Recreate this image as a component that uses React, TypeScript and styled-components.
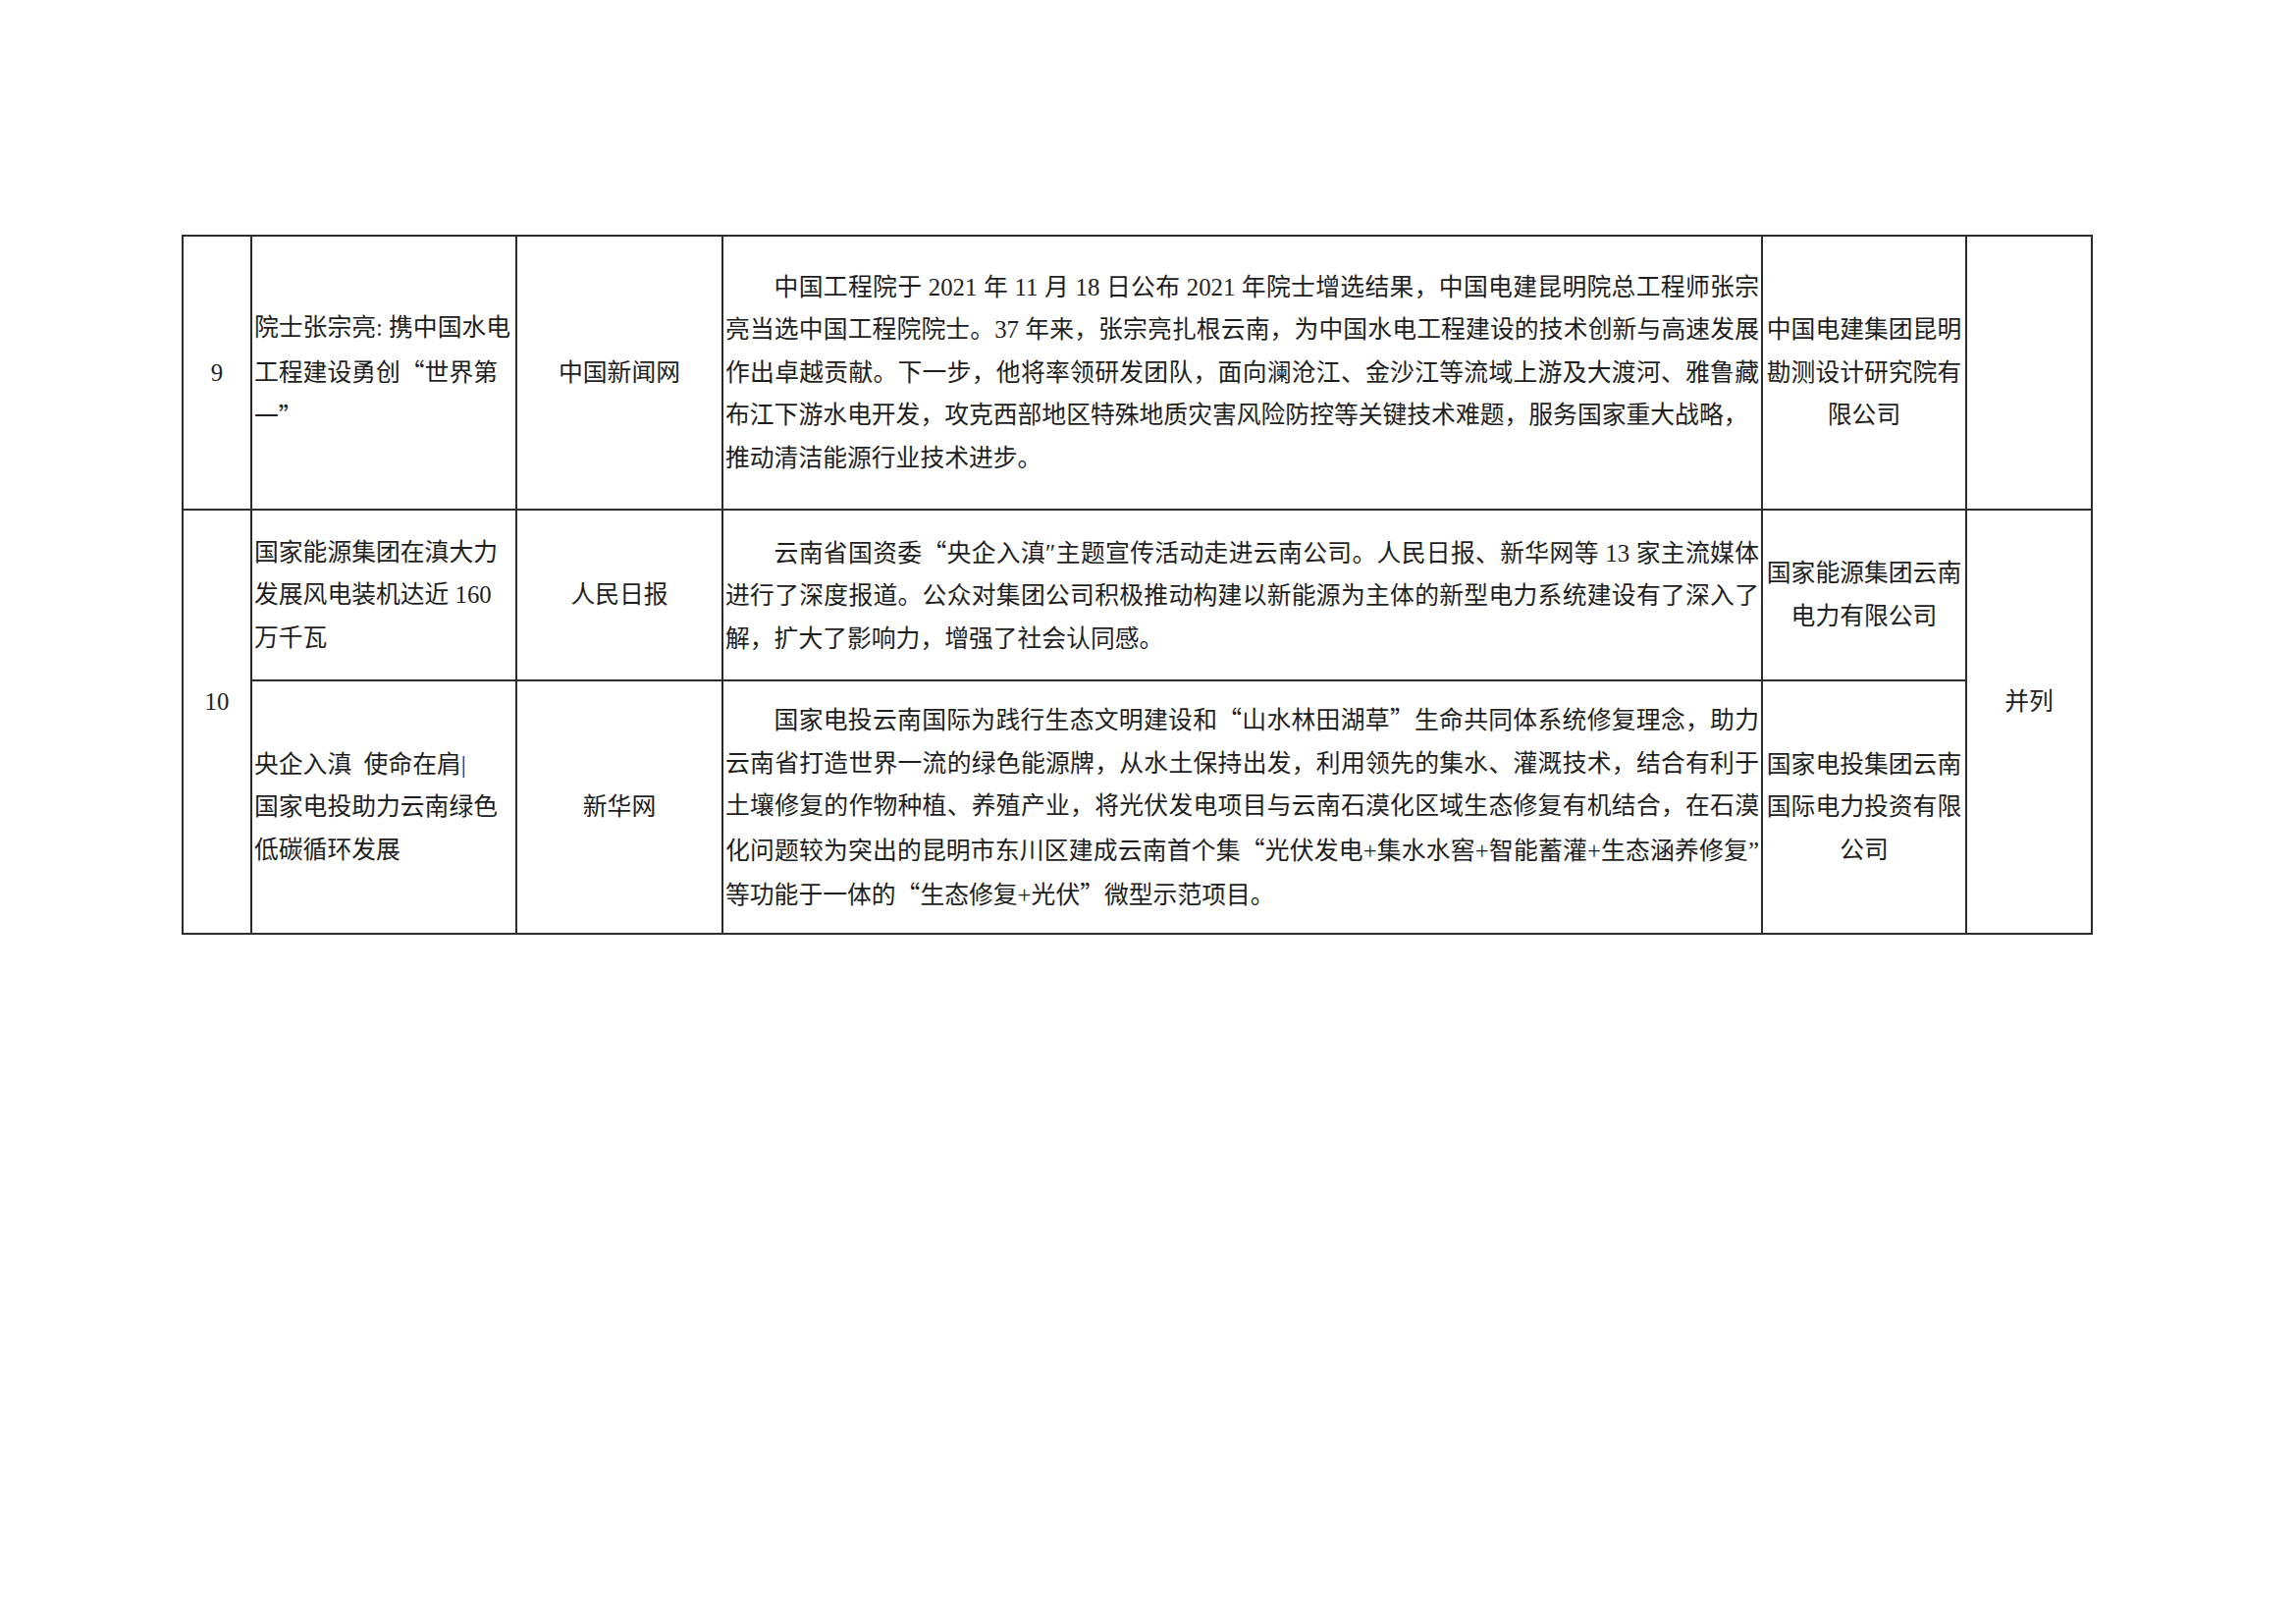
import React from "react";
import styled, { createGlobalStyle } from "styled-components";

const GlobalStyle = createGlobalStyle`
  html, body {
    margin: 0;
    padding: 0;
    background: #ffffff;
  }
`;

const Page = styled.div`
  width: 2339px;
  height: 1654px;
  box-sizing: border-box;
  padding: 239px 0 0 185px;
  background: #ffffff;
`;

const Table = styled.table`
  width: 1945px;
  border-collapse: collapse;
  table-layout: fixed;
  font-family: "Liberation Serif", "Noto Sans CJK SC", serif;
  font-size: 24.8px;
  font-weight: 400;
  color: #1e1e1e;
`;

const Col = styled.col<{ $w: number }>`
  width: ${(p) => p.$w}px;
`;

const Row = styled.tr<{ $h: number }>`
  height: ${(p) => p.$h}px;
`;

const Cell = styled.td<{ $align?: "left" | "center"; $lift?: number }>`
  border: 2px solid #2c2c2c;
  padding: 0 2px ${(p) => p.$lift || 0}px 2px;
  vertical-align: middle;
  text-align: ${(p) => p.$align || "center"};
  line-height: 43.6px;
  overflow: hidden;
`;

const Line = styled.span<{ $last?: boolean; $indent?: boolean }>`
  display: block;
  white-space: nowrap;
  text-align: justify;
  text-align-last: ${(p) => (p.$last ? "left" : "justify")};
  padding-left: ${(p) => (p.$indent ? "2em" : "0")};
`;

const Plain = styled.span`
  display: block;
  white-space: pre;
`;

// full-width quote marks as in the SimSun original
const Quote = styled.span`
  font-family: "Noto Sans CJK SC", sans-serif;
`;

// "“" and "”" become full-width marks; "”^" keeps the narrow latin mark
const renderText = (text: string) =>
  text.split(/(“|”\^|”)/).map((part, i) => {
    if (part === "“" || part === "”") return <Quote key={i}>{part}</Quote>;
    if (part === "”^") return "”";
    return part;
  });

const Paragraph = ({ lines }: { lines: string[] }) => (
  <>
    {lines.map((l, i) => (
      <Line key={i} $indent={i === 0} $last={i === lines.length - 1 || l.endsWith("#")}>
        {renderText(l.replace(/#$/, ""))}
      </Line>
    ))}
  </>
);

const Stack = ({ lines }: { lines: string[] }) => (
  <>
    {lines.map((l, i) => (
      <Plain key={i}>{renderText(l)}</Plain>
    ))}
  </>
);

const App: React.FC = () => {
  return (
    <Page>
      <GlobalStyle />
      <Table>
        <colgroup>
          <Col $w={70} />
          <Col $w={270} />
          <Col $w={210} />
          <Col $w={1059} />
          <Col $w={208} />
          <Col $w={128} />
        </colgroup>
        <tbody>
          <Row $h={279}>
            <Cell>9</Cell>
            <Cell $align="left">
              <Stack lines={["院士张宗亮: 携中国水电", "工程建设勇创“世界第", "一”"]} />
            </Cell>
            <Cell>中国新闻网</Cell>
            <Cell $align="left">
              <Paragraph
                lines={[
                  "中国工程院于 2021 年 11 月 18 日公布 2021 年院士增选结果，中国电建昆明院总工程师张宗",
                  "亮当选中国工程院院士。37 年来，张宗亮扎根云南，为中国水电工程建设的技术创新与高速发展",
                  "作出卓越贡献。下一步，他将率领研发团队，面向澜沧江、金沙江等流域上游及大渡河、雅鲁藏",
                  "布江下游水电开发，攻克西部地区特殊地质灾害风险防控等关键技术难题，服务国家重大战略，#",
                  "推动清洁能源行业技术进步。",
                ]}
              />
            </Cell>
            <Cell>
              <Stack lines={["中国电建集团昆明", "勘测设计研究院有", "限公司"]} />
            </Cell>
            <Cell />
          </Row>
          <Row $h={174}>
            <Cell rowSpan={2} $lift={40}>10</Cell>
            <Cell $align="left">
              <Stack lines={["国家能源集团在滇大力", "发展风电装机达近 160", "万千瓦"]} />
            </Cell>
            <Cell>人民日报</Cell>
            <Cell $align="left">
              <Paragraph
                lines={[
                  "云南省国资委“央企入滇″主题宣传活动走进云南公司。人民日报、新华网等 13 家主流媒体",
                  "进行了深度报道。公众对集团公司积极推动构建以新能源为主体的新型电力系统建设有了深入了",
                  "解，扩大了影响力，增强了社会认同感。",
                ]}
              />
            </Cell>
            <Cell>
              <Stack lines={["国家能源集团云南", "电力有限公司"]} />
            </Cell>
            <Cell rowSpan={2} $lift={40}>并列</Cell>
          </Row>
          <Row $h={258}>
            <Cell $align="left">
              <Stack lines={["央企入滇  使命在肩|", "国家电投助力云南绿色", "低碳循环发展"]} />
            </Cell>
            <Cell>新华网</Cell>
            <Cell $align="left">
              <Paragraph
                lines={[
                  "国家电投云南国际为践行生态文明建设和“山水林田湖草”生命共同体系统修复理念，助力",
                  "云南省打造世界一流的绿色能源牌，从水土保持出发，利用领先的集水、灌溉技术，结合有利于",
                  "土壤修复的作物种植、养殖产业，将光伏发电项目与云南石漠化区域生态修复有机结合，在石漠",
                  "化问题较为突出的昆明市东川区建成云南首个集“光伏发电+集水水窖+智能蓄灌+生态涵养修复”^",
                  "等功能于一体的“生态修复+光伏”微型示范项目。",
                ]}
              />
            </Cell>
            <Cell>
              <Stack lines={["国家电投集团云南", "国际电力投资有限", "公司"]} />
            </Cell>
          </Row>
        </tbody>
      </Table>
    </Page>
  );
};

export default App;
